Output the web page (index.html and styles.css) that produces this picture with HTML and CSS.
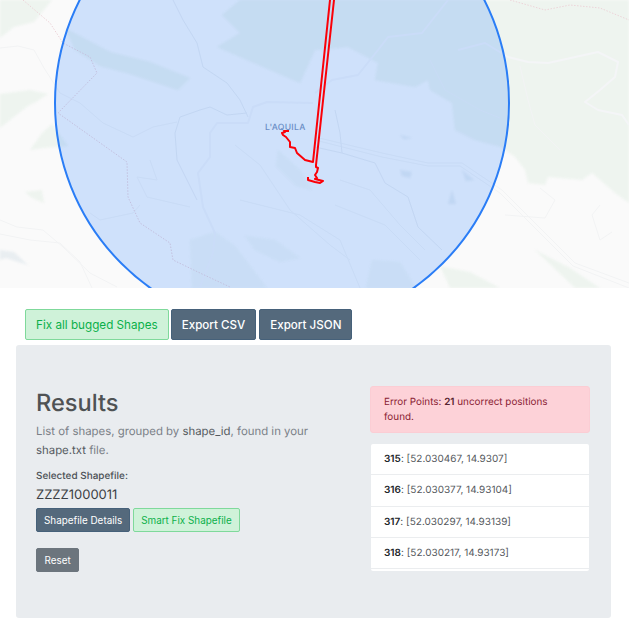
FILE: index.html
```html
<!DOCTYPE html>
<html lang="en">
<head>
<meta charset="utf-8">
<title>Results</title>
<link rel="stylesheet" href="styles.css">
</head>
<body>
<div class="map">
<svg class="map-svg" width="629" height="288" viewBox="0 0 629 288" xmlns="http://www.w3.org/2000/svg">
  <rect width="629" height="288" fill="#fafafa"/>
  <g class="areas">
    <g fill="#eef4ef">
      <path d="M0 0H52L34 22L14 27L0 38Z"/>
      <path d="M0 94L30 90L48 94L36 102L28 106L0 128Z"/>
      <path d="M30 150L42 133L52 124L68 146L44 148Z"/>
      <path d="M25 192L42 190L44 203L32 198Z"/>
      <path d="M222 15L240 0H629V203L615 193L592 173L582 180L548 177L545 185L528 183L525 170L515 157L501 147L475 140L455 130L452 103L430 90L428 80L415 87L375 80L378 63L348 47L315 50L300 83L270 70L217 47L240 33Z"/>
      <path d="M65 28L110 52L150 62L190 78L178 90L130 74L100 66L75 50Z"/>
      <path d="M440 266L470 272L500 288H450Z"/>
      <path d="M535 250L570 268L600 288H575Z"/>
    </g>
    <g fill="#f3f6f4">
      <path d="M190 240L215 232L235 246L267 288H192Z"/>
      <path d="M372 260L400 262L416 288H366Z"/>
      <path d="M245 236L275 240L300 258L280 262L255 250Z"/>
      <path d="M278 150L300 170L312 190L296 186L276 166Z"/>
    </g>
    <g fill="#e9eef1">
      <path d="M0 250L14 252L28 265L18 262L6 258L0 260Z"/>
      <path d="M400 135L408 137L412 138L404 139Z"/>
      <path d="M400 170L412 172L410 178L402 176Z"/>
      <path d="M462 170L474 180L466 181Z"/>
      <path d="M452 190L456 204L448 204Z"/>
    </g>
  </g>
  <g class="lines">
    <g fill="none" stroke="#f2f3f4" stroke-width="1">
      <path d="M0 48L18 46L34 50L44 68L60 93L80 103L103 123L133 137L153 127L177 122"/>
      <path d="M0 220L17 227L43 230L63 247L90 273L117 287"/>
      <path d="M0 234L30 240L60 243L80 262L92 288"/>
      <path d="M90 213L100 220L133 213L140 205"/>
      <path d="M150 160L157 180L137 177L147 197L190 207"/>
      <path d="M315 137L382 153L428 163L462 163L502 190L575 263L629 283"/>
      <path d="M315 140L382 157L428 166L460 166L500 193L573 266L629 288"/>
      <path d="M505 215L545 218L555 200L540 188"/>
      <path d="M600 205L592 215L600 240L612 232"/>
      <path d="M235 145L260 165L290 210L330 245L350 260"/>
      <path d="M340 180L370 190L400 225L425 250"/>
      <path d="M240 200L300 215L340 240L360 288"/>
      <path d="M335 205L385 225L420 260"/>
      <path d="M430 60L445 90L480 110L500 118"/>
      <path d="M520 66L528 100L535 125L560 150"/>
    </g>
    <g fill="none" stroke="#ebedf0" stroke-width="1">
      <path d="M173 0L183 20L197 43L203 67L227 83L240 100L248 117"/>
      <path d="M247 113L227 115L210 107L200 110L180 117L175 133L177 160L187 180L197 200"/>
      <path d="M315 147L342 153L375 163L385 183L408 197L418 227L442 250"/>
      <path d="M335 110L340 133L342 153"/>
    </g>
    <g fill="none" stroke="#f4f5f7" stroke-width="2" stroke-linejoin="round">
      <path d="M313 103L267 102L253 107L248 123L217 123L210 133L210 157L198 173L203 207L215 233L213 253L200 287"/>
      <path d="M448 0L422 33L388 37L378 50L358 75L332 80L315 93"/>
      <path d="M458 50L485 43L508 57L528 62L548 63L598 52L618 62L615 77L600 90L585 102L598 110L622 115L629 125"/>
    </g>
    <path fill="none" stroke="#ecd3d8" stroke-width="1" stroke-dasharray="1.5 1.5" d="M23 0L50 23L63 43L90 57L97 73L58 113L127 162L128 197L140 223L170 243L173 260L200 273L230 287"/>
    <path fill="none" stroke="#ecd3d8" stroke-width="1" stroke-dasharray="1.5 1.5" d="M510 0L545 10L570 5L600 8L629 20"/>
  </g>
  <text class="city" x="265" y="130">L'AQUILA</text>
  <circle class="radius" cx="282" cy="103" r="227"/>
  <g class="track">
    <path d="M330 0L313 162L305 160L297 153L295 148L290 147L290 142L286 137L283 135L282 133L285 132L284 131L289 131"/>
    <path d="M334 0L316 165L316 167L318 168L317 172L315 175L317 178L315 179L323 181L320 183L315 182L308 180L308 177"/>
  </g>
</svg>
</div>
<div class="toolbar">
  <button class="btn btn-lg btn-success">Fix all bugged Shapes</button>
  <button class="btn btn-lg btn-slate">Export CSV</button>
  <button class="btn btn-lg btn-slate">Export JSON</button>
</div>
<main class="panel">
  <section class="info">
    <h1 class="title">Results</h1>
    <p class="lead">List of shapes, grouped by <span class="mark">shape_id</span>, found in your <span class="mark">shape.txt</span> file.</p>
    <div class="label">Selected Shapefile:</div>
    <div class="shape-id">ZZZZ1000011</div>
    <div class="actions">
      <button class="btn btn-slate">Shapefile Details</button>
      <button class="btn btn-success">Smart Fix Shapefile</button>
    </div>
    <button class="btn btn-gray">Reset</button>
  </section>
  <section class="errors">
    <div class="alert">Error Points: <strong>21</strong> uncorrect positions found.</div>
    <ul class="points">
      <li><strong>315</strong>: [52.030467, 14.9307]</li>
      <li><strong>316</strong>: [52.030377, 14.93104]</li>
      <li><strong>317</strong>: [52.030297, 14.93139]</li>
      <li><strong>318</strong>: [52.030217, 14.93173]</li>
    </ul>
  </section>
</main>
</body>
</html>
```

FILE: styles.css
```css
html, body {
  margin: 0;
  padding: 0;
  background: #fff;
  font-family: Inter, "Liberation Sans", sans-serif;
  color: #212529;
  text-rendering: geometricPrecision;
}
.map {
  height: 288px;
  overflow: hidden;
}
.map-svg {
  display: block;
}
.areas {
  filter: blur(1px);
}
.lines {
  filter: blur(0.5px);
}
.city {
  font-family: Inter, sans-serif;
  font-size: 8.6px;
  font-weight: 500;
  letter-spacing: 0.3px;
  fill: #7f94b8;
}
.radius {
  fill: #0d6efd;
  fill-opacity: 0.18;
  stroke: #2a7df6;
  stroke-width: 2;
}
.track path {
  fill: none;
  stroke: #fb0008;
  stroke-width: 2;
  stroke-linejoin: round;
}
.toolbar {
  display: flex;
  gap: 3px;
  padding: 21px 0 0 25px;
}
.btn {
  font-family: inherit;
  font-size: 9.9px;
  font-weight: 400;
  line-height: 14px;
  height: 24px;
  padding: 4px 7px;
  border: 1px solid transparent;
  border-radius: 2px;
  display: block;
}
.btn-lg {
  font-size: 11.7px;
  line-height: 16px;
  padding: 6px 10px;
  height: 31px;
}
.btn-success {
  background: #cff2d9;
  border-color: #7fd99b;
  color: #0bb04a;
}
.btn-slate {
  background: #54697c;
  border-color: #46617a;
  color: #fff;
}
.btn-lg.btn-success {
  margin-right: -1px;
}
.btn-lg.btn-slate {
  font-size: 11.6px;
  font-weight: 500;
}
.btn-gray {
  background: #6c757d;
  border-color: #6c757d;
  color: #fff;
  padding-left: 7.5px;
  padding-right: 7.5px;
}
.panel {
  display: grid;
  grid-template-columns: 1fr 220px;
  column-gap: 40px;
  margin: 5px 18px 0 16px;
  height: 273px;
  box-sizing: border-box;
  padding: 41px 21px 0 20px;
  background: #e9ecef;
  border-radius: 3px;
}
.title {
  margin: 0;
  padding-top: 2px;
  font-size: 23.6px;
  font-weight: 500;
  line-height: 29px;
  color: #4f5254;
}
.lead {
  margin: 5px 0 0;
  font-size: 11.4px;
  line-height: 19px;
  color: #7a8087;
}
.mark {
  color: #555a5f;
}
.label {
  margin-top: 9px;
  font-size: 9.95px;
  line-height: 14px;
  font-weight: 500;
  color: #4c5156;
}
.shape-id {
  margin-top: 3px;
  font-size: 13px;
  line-height: 19px;
  color: #3c4043;
}
.actions {
  display: flex;
  gap: 3px;
  margin-top: 3px;
  margin-bottom: 16px;
}
.alert {
  box-sizing: border-box;
  height: 47px;
  padding: 8px 13px;
  font-size: 9.9px;
  line-height: 15px;
  color: #8a1c33;
  background: #fdd2d8;
  border: 1px solid #fbcdd4;
  border-radius: 3px;
}
.alert strong {
  font-weight: 600;
  color: #57242f;
}
.points {
  list-style: none;
  margin: 11px 1px 0;
  padding: 0;
  height: 127px;
  overflow: hidden;
  background: #fff;
  border-radius: 2px;
}
.points li {
  box-sizing: border-box;
  height: 31.3px;
  padding: 0 13px;
  font-size: 10px;
  line-height: 30px;
  color: #55595d;
  border-bottom: 1px solid #ebedef;
}
.points strong {
  font-weight: 600;
  color: #212529;
}
```
